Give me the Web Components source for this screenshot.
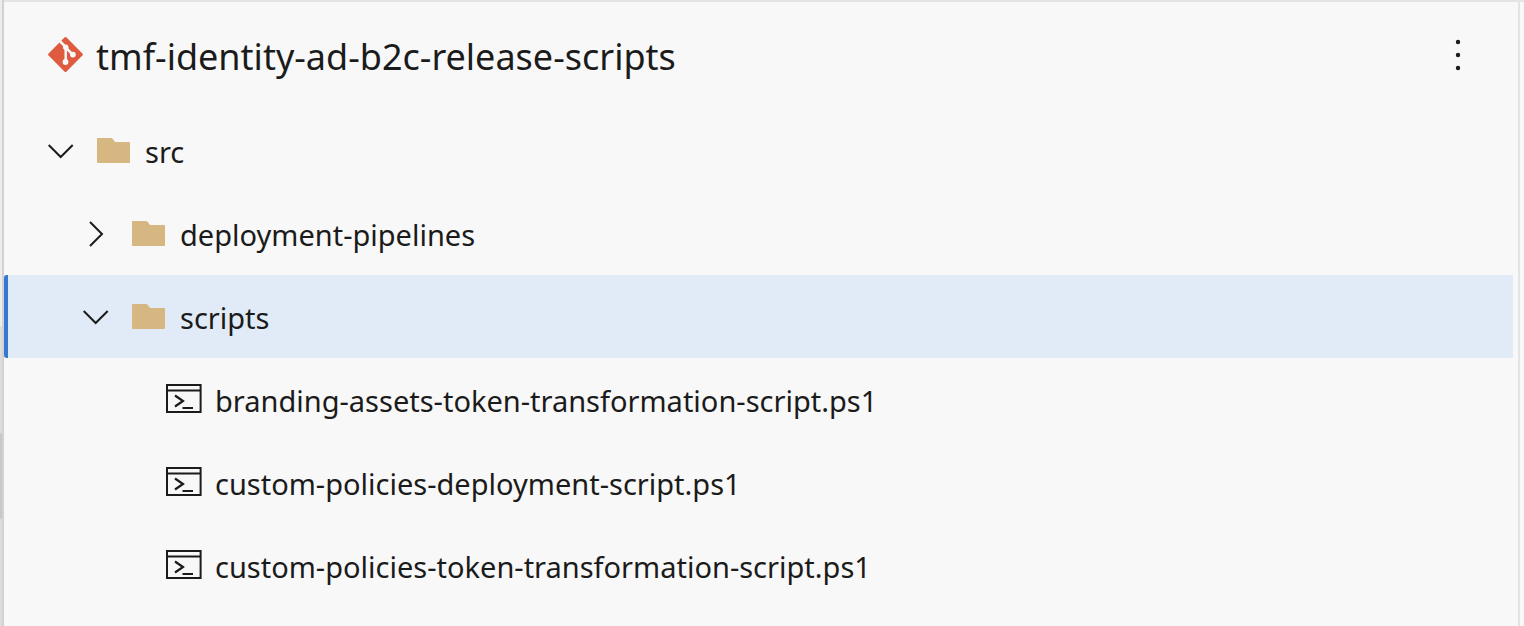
<!DOCTYPE html>
<html lang="en">
<head>
<meta charset="utf-8">
<title>tmf-identity-ad-b2c-release-scripts</title>
<style>
  html, body { height: 100%; margin: 0; }
  body { background: #f8f8f8; color: #1b1b1b; font-family: "Noto Sans", "Open Sans", sans-serif; font-size: 29px; }
</style>
</head>
<body>
<repo-explorer>
  <repo-header slot="header">tmf-identity-ad-b2c-release-scripts</repo-header>
  <tree-row kind="folder" level="1" open>src</tree-row>
  <tree-row kind="folder" level="2">deployment-pipelines</tree-row>
  <tree-row kind="folder" level="2" open selected>scripts</tree-row>
  <tree-row kind="file" level="3">branding-assets-token-transformation-script.ps1</tree-row>
  <tree-row kind="file" level="3">custom-policies-deployment-script.ps1</tree-row>
  <tree-row kind="file" level="3">custom-policies-token-transformation-script.ps1</tree-row>
</repo-explorer>
<script>
class ScrollRail extends HTMLElement {
  constructor() {
    super();
    this.attachShadow({ mode: 'open' }).innerHTML = `
      <style>
        :host { display: flex; flex-direction: column; background: #dcdcdc; border-right: 2px solid #d2d2d2; }
        .top { flex: 327; background: #ececec; }
        .track { flex: 107; }
        .thumb { flex: 86; background: #c8c8c8; border-radius: 0 2px 2px 0; }
      </style>
      <div class="top"></div><div class="track"></div><div class="thumb"></div><div class="track"></div>`;
  }
}

class RepoExplorer extends HTMLElement {
  constructor() {
    super();
    this.attachShadow({ mode: 'open' }).innerHTML = `
      <style>
        :host { display: grid; grid-template-columns: 4px 1fr 4px; min-height: 100vh; box-sizing: border-box; }
        .panel { border-top: 2px solid #e4e4e4; border-right: 2px solid #e4e4e4; padding-right: 5px; min-width: 0; }
        .edge { border-top: 2px solid #e4e4e4; }
      </style>
      <scroll-rail></scroll-rail>
      <section class="panel">
        <slot name="header"></slot>
        <nav aria-label="Files"><slot></slot></nav>
      </section>
      <div class="edge"></div>`;
  }
}

class RepoHeader extends HTMLElement {
  constructor() {
    super();
    this.attachShadow({ mode: 'open' }).innerHTML = `
      <style>
        :host { display: flex; align-items: center; height: 107px; padding: 0 40px 2px 43px; box-sizing: border-box; }
        .logo { flex: none; margin-right: 12px; }
        h1 { flex: 1; margin: 4px 0 0; font: inherit; font-size: 36px; line-height: 48px; white-space: nowrap; }
        button { display: grid; place-items: center; width: 30px; height: 48px; padding: 0; border: 0; background: none; color: inherit; }
      </style>
      <svg class="logo" width="37" height="37" viewBox="0 0 37 37" aria-hidden="true">
        <rect x="5.8" y="5.8" width="25.4" height="25.4" rx="1.5" transform="rotate(45 18.5 18.5)" fill="#de5b3f"/>
        <g stroke="#f8f8f8" fill="#f8f8f8">
          <path d="M12.8 5 L18.7 11 V26 M18.7 11.5 L25.5 18.3" fill="none" stroke-width="2.5"/>
          <circle cx="18.7" cy="11.3" r="2.7" stroke="none"/>
          <circle cx="18.5" cy="26" r="2.9" stroke="none"/>
          <circle cx="25.9" cy="18.6" r="2.9" stroke="none"/>
        </g>
      </svg>
      <h1><slot></slot></h1>
      <button type="button" aria-label="More actions">
        <svg width="6" height="32" viewBox="0 0 6 32" fill="#1b1b1b" aria-hidden="true">
          <circle cx="3" cy="3" r="2.2"/><circle cx="3" cy="16" r="2.2"/><circle cx="3" cy="29" r="2.2"/>
        </svg>
      </button>`;
  }
}

const CHEVRON_DOWN = '<path d="M0.7 7 L12.7 19 L24.7 7"/>';
const CHEVRON_RIGHT = '<path d="M7 1 L19 13 L7 25"/>';
const FOLDER = `<svg width="36" height="30" viewBox="0 0 36 30" aria-hidden="true">
  <path d="M0 3 Q0 2 1 2 H13.5 Q15 2 16 3.3 L18 6 H32 Q33 6 33 7 V26 Q33 27 32 27 H1 Q0 27 0 26 Z" fill="#d6b681"/></svg>`;
const SCRIPT = `<svg width="36" height="30" viewBox="0 1 36 30" fill="none" stroke="#1b1b1b" aria-hidden="true">
  <rect x="0" y="1" width="33.6" height="27" stroke-width="2"/>
  <path d="M0 6.4 H34" stroke-width="2"/>
  <path d="M8 11.5 L16 17 L8 22.5" stroke-width="2.2"/><path d="M15.5 24 H26" stroke-width="2"/></svg>`;

class TreeRow extends HTMLElement {
  connectedCallback() {
    if (this.shadowRoot) return;
    const folder = this.getAttribute('kind') === 'folder';
    const open = this.hasAttribute('open');
    const tag = folder ? 'button' : 'a';
    const attrs = folder ? `type="button" aria-expanded="${open}"` : 'href="#"';
    this.attachShadow({ mode: 'open' }).innerHTML = `
      <style>
        :host { display: block; --indent: ${Number(this.getAttribute('level')) - 1}; }
        .row { display: flex; align-items: center; box-sizing: border-box; width: 100%; height: 83px;
               padding: 0 0 0 calc(44px + 35px * var(--indent)); border: 0; background: none;
               color: inherit; font: inherit; line-height: 40px; text-align: left; text-decoration: none; white-space: nowrap; }
        :host([selected]) { background: #e1ebf7; }
        :host([selected]) .row { background: linear-gradient(#3478d1, #3478d1) left / 4px 100% no-repeat; border-radius: 3px 0 0 3px; }
        .chevron { flex: none; width: 26px; height: 26px; margin-right: 23px; fill: none; stroke: #1b1b1b; stroke-width: 2; }
        .icon { display: flex; flex: none; margin-right: 12px; }
        .icon svg { overflow: visible; }
        .label { margin-top: 2px; }
      </style>
      <${tag} class="row" ${attrs}>
        <svg class="chevron" viewBox="0 0 26 26" aria-hidden="true">${folder ? (open ? CHEVRON_DOWN : CHEVRON_RIGHT) : ''}</svg>
        <span class="icon">${folder ? FOLDER : SCRIPT}</span>
        <span class="label"><slot></slot></span>
      </${tag}>`;
  }
}

customElements.define('scroll-rail', ScrollRail);
customElements.define('repo-explorer', RepoExplorer);
customElements.define('repo-header', RepoHeader);
customElements.define('tree-row', TreeRow);
</script>
</body>
</html>
